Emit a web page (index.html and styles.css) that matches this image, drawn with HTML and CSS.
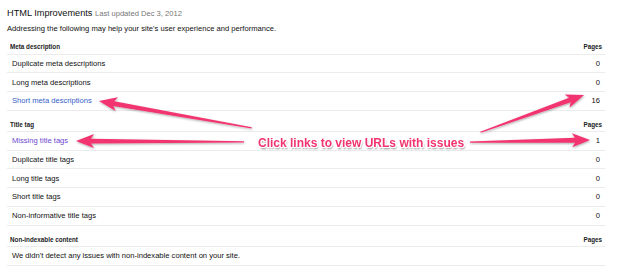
FILE: index.html
```html
<!DOCTYPE html>
<html>
<head>
    <title>HTML Improvements</title>
    <link rel="stylesheet" href="styles.css">
</head>
<body>
    <div class="page">
        <h1>HTML Improvements <span class="updated">Last updated Dec 3, 2012</span></h1>
        <p class="intro">Addressing the following may help your site's user experience and performance.</p>

        <div class="section">
            <div class="sec-head"><span>Meta description</span><span>Pages</span></div>
            <div class="row"><span>Duplicate meta descriptions</span><span class="num">0</span></div>
            <div class="row"><span>Long meta descriptions</span><span class="num">0</span></div>
            <div class="row"><a class="link" href="#">Short meta descriptions</a><span class="num">16</span></div>
        </div>

        <div class="section">
            <div class="sec-head"><span>Title tag</span><span>Pages</span></div>
            <div class="row"><a class="link visited" href="#">Missing title tags</a><span class="num">1</span></div>
            <div class="row"><span>Duplicate title tags</span><span class="num">0</span></div>
            <div class="row"><span>Long title tags</span><span class="num">0</span></div>
            <div class="row"><span>Short title tags</span><span class="num">0</span></div>
            <div class="row"><span>Non-informative title tags</span><span class="num">0</span></div>
        </div>

        <div class="section">
            <div class="sec-head"><span>Non-indexable content</span><span>Pages</span></div>
            <div class="row"><span>We didn't detect any issues with non-indexable content on your site.</span></div>
        </div>
    </div>

    <!-- annotation layer -->
    <svg class="arrows" width="620" height="274" viewBox="0 0 620 274">
        <defs>
            <filter id="shadow" x="-10%" y="-50%" width="120%" height="200%">
                <feDropShadow dx="0.5" dy="1" stdDeviation="0.8" flood-color="#000" flood-opacity="0.35"/>
            </filter>
        </defs>
        <g fill="#f23470" filter="url(#shadow)">
            <g transform="translate(99 101) rotate(10)">
                <polygon points="0,0 18,-7 15,-2.4 155,-0.6 155,0.6 15,2.4 18,7"/>
            </g>
            <g transform="translate(76 141) rotate(0.3)">
                <polygon points="0,0 18,-7 15,-2.4 168,-0.6 168,0.6 15,2.4 18,7"/>
            </g>
            <g transform="translate(584 95) rotate(160.2)">
                <polygon points="0,0 18,-7 15,-2.4 110,-0.6 110,0.6 15,2.4 18,7"/>
            </g>
            <g transform="translate(590 140) rotate(179)">
                <polygon points="0,0 18,-7 15,-2.4 120,-0.6 120,0.6 15,2.4 18,7"/>
            </g>
        </g>
    </svg>
    <div class="callout">Click links to view URLs with issues</div>
</body>
</html>
```

FILE: styles.css
```css
body {
    margin: 0;
    font-family: "Liberation Sans", Arial, sans-serif;
    color: #111;
    background: #fff;
}

.page {
    padding: 8px 15px 0 7px;
}

h1 {
    margin: 0;
    font-size: 9.2px;
    line-height: 11px;
    font-weight: normal;
    color: #111;
}

.updated {
    font-size: 7.6px;
    color: #777;
}

.intro {
    margin: 5px 0 0;
    font-size: 7.6px;
    line-height: 10px;
}

.section {
    margin-top: 9px;
}

.section + .section {
    margin-top: 10px;
}

.sec-head {
    display: flex;
    justify-content: space-between;
    padding: 0 3px 2.5px 3px;
    font-size: 6.3px;
    line-height: 8px;
    font-weight: bold;
    color: #222;
    border-bottom: 1px solid #ececec;
}

.row {
    display: flex;
    justify-content: space-between;
    align-items: center;
    height: 17.7px;
    padding: 0 5px;
    font-size: 7.6px;
    border-bottom: 1px solid #ececec;
}

.link {
    color: #3561c9;
    text-decoration: none;
}

.link.visited {
    color: #7047d1;
}

.num {
    color: #111;
}

.arrows {
    position: absolute;
    left: 0;
    top: 0;
    pointer-events: none;
}

.callout {
    position: absolute;
    left: 258px;
    top: 136px;
    font-size: 12px;
    line-height: 14px;
    font-weight: bold;
    color: #f23470;
    white-space: nowrap;
    text-shadow: 1px 0 #fff, -1px 0 #fff, 0 1px #fff, 0 -1px #fff,
        1px 1px #fff, -1px -1px #fff, 1px -1px #fff, -1px 1px #fff,
        1px 2px 2px rgba(0, 0, 0, 0.5);
}
```
